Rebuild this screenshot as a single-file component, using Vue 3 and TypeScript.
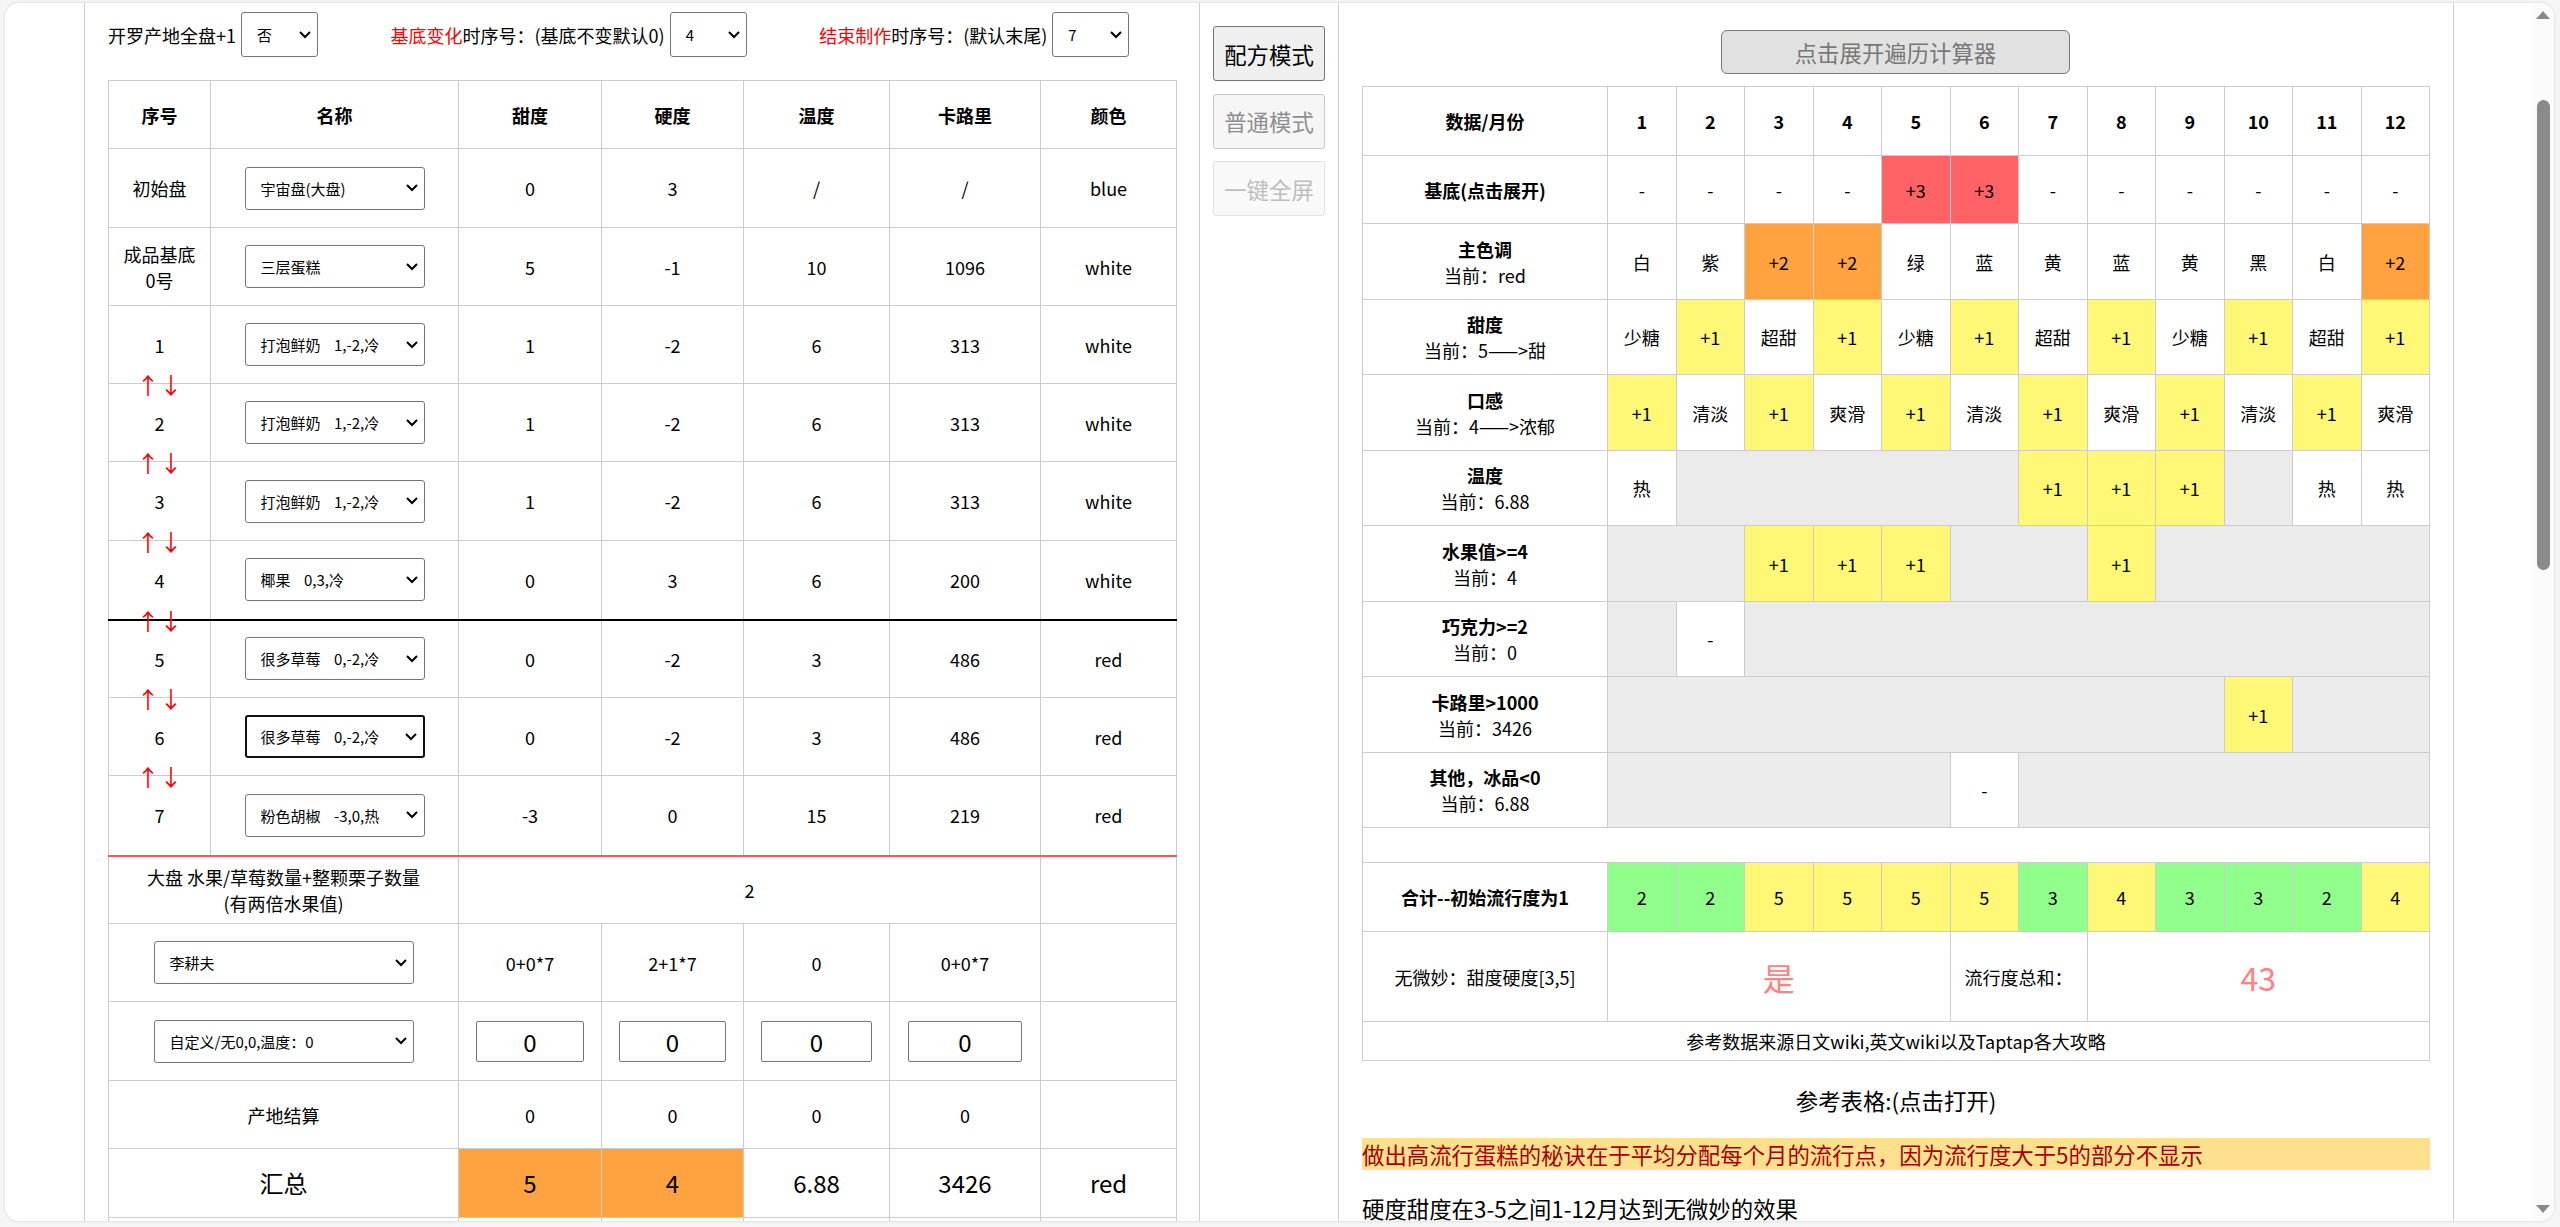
<template>
  <div class="panel">
    <div class="main">
      <!-- 配方表 -->
      <section class="left">
        <div class="top-bar">
          <label class="top-item">
            开罗产地全盘+1
            <select class="sel sel-small"><option>否</option></select>
          </label>
          <label class="top-item">
            <span><em>基底变化</em>时序号：(基底不变默认0)</span>
            <select class="sel sel-small"><option>4</option></select>
          </label>
          <label class="top-item">
            <span><em>结束制作</em>时序号：(默认末尾)</span>
            <select class="sel sel-small"><option>7</option></select>
          </label>
        </div>

        <table class="grid">
          <colgroup>
            <col v-for="(w, i) in leftCols" :key="i" :style="{ width: w + 'px' }" />
          </colgroup>
          <tr class="h-68">
            <th v-for="h in leftHead" :key="h">{{ h }}</th>
          </tr>
          <tr
            v-for="row in recipeRows"
            :key="row.seq"
            :class="{ 'line-black': row.line === 'black', 'line-red': row.line === 'red' }"
            :style="{ height: row.h + 'px' }"
          >
            <td class="seq">
              <span v-html="row.seq"></span>
              <span v-if="row.arrows" class="arrows">↑↓</span>
            </td>
            <td>
              <select class="sel sel-name" :class="{ focused: row.focused }">
                <option>{{ row.name }}</option>
              </select>
            </td>
            <td v-for="(v, i) in row.vals" :key="i">{{ v }}</td>
          </tr>
          <tr class="h-68">
            <td colspan="2">大盘 水果/草莓数量+整颗栗子数量<br />(有两倍水果值)</td>
            <td colspan="4">2</td>
            <td></td>
          </tr>
          <tr class="h-78">
            <td colspan="2"><select class="sel sel-wide"><option>李耕夫</option></select></td>
            <td>0+0*7</td>
            <td>2+1*7</td>
            <td>0</td>
            <td>0+0*7</td>
            <td></td>
          </tr>
          <tr class="h-79">
            <td colspan="2">
              <select class="sel sel-wide"><option>自定义/无0,0,温度：0</option></select>
            </td>
            <td v-for="n in 4" :key="n"><input class="num" value="0" /></td>
            <td></td>
          </tr>
          <tr class="h-68">
            <td colspan="2">产地结算</td>
            <td v-for="n in 4" :key="n">0</td>
            <td></td>
          </tr>
          <tr class="h-69 total">
            <td colspan="2">汇总</td>
            <td class="orange">5</td>
            <td class="orange">4</td>
            <td>6.88</td>
            <td>3426</td>
            <td>red</td>
          </tr>
          <tr class="h-40">
            <td colspan="2"></td>
            <td></td>
            <td></td>
            <td></td>
            <td></td>
            <td></td>
          </tr>
        </table>
      </section>

      <!-- 模式切换 -->
      <section class="mid">
        <button class="mode">配方模式</button>
        <button class="mode off">普通模式</button>
        <button class="mode off2">一键全屏</button>
      </section>

      <!-- 流行度表 -->
      <section class="right">
        <button class="expand">点击展开遍历计算器</button>
        <table class="grid">
          <colgroup>
            <col class="first-col" />
            <col v-for="n in 12" :key="n" />
          </colgroup>
          <tr class="h-69">
            <th>数据/月份</th>
            <th v-for="n in 12" :key="n">{{ n }}</th>
          </tr>
          <tr v-for="row in trendRows" :key="row.title" :style="{ height: row.h + 'px' }">
            <td>
              <b>{{ row.title }}</b>
              <template v-if="row.sub"><br />{{ row.sub }}</template>
            </td>
            <td v-for="(c, i) in row.cells" :key="i" :colspan="c.span" :class="c.color">{{ c.text }}</td>
          </tr>
          <tr class="h-35"><td colspan="13"></td></tr>
          <tr class="h-69">
            <td><b>合计--初始流行度为1</b></td>
            <td v-for="(v, i) in totals" :key="i" :class="v > 3 ? 'yellow' : 'green'">{{ v }}</td>
          </tr>
          <tr class="h-90">
            <td>无微妙：甜度硬度[3,5]</td>
            <td colspan="5" class="big">是</td>
            <td colspan="2">流行度总和：</td>
            <td colspan="5" class="big">43</td>
          </tr>
          <tr class="h-39"><td colspan="13">参考数据来源日文wiki,英文wiki以及Taptap各大攻略</td></tr>
        </table>
        <div class="ref-title">参考表格:(点击打开)</div>
        <div class="tip">做出高流行蛋糕的秘诀在于平均分配每个月的流行点，因为流行度大于5的部分不显示</div>
        <div class="note">硬度甜度在3-5之间1-12月达到无微妙的效果</div>
      </section>
    </div>

    <div class="scrollbar">
      <i class="tri up"></i>
      <i class="thumb"></i>
      <i class="tri down"></i>
    </div>
  </div>
</template>

<script setup lang="ts">
interface RecipeRow {
  seq: string
  name: string
  vals: (string | number)[]
  h: number
  arrows?: boolean
  line?: 'black' | 'red'
  focused?: boolean
}

interface Cell {
  text: string
  color?: string
  span?: number
}

interface TrendRow {
  title: string
  sub?: string
  h: number
  cells: Cell[]
}

const leftCols = [102, 248, 143, 142, 146, 151, 136]
const leftHead = ['序号', '名称', '甜度', '硬度', '温度', '卡路里', '颜色']
const gap = '\u00a0\u00a0\u00a0\u00a0'

const recipeRows: RecipeRow[] = [
  { seq: '初始盘', name: '宇宙盘(大盘)', vals: [0, 3, '/', '/', 'blue'], h: 79 },
  { seq: '成品基底<br>0号', name: '三层蛋糕', vals: [5, -1, 10, 1096, 'white'], h: 78 },
  { seq: '1', name: `打泡鲜奶${gap}1,-2,冷`, vals: [1, -2, 6, 313, 'white'], h: 78, arrows: true },
  { seq: '2', name: `打泡鲜奶${gap}1,-2,冷`, vals: [1, -2, 6, 313, 'white'], h: 78, arrows: true },
  { seq: '3', name: `打泡鲜奶${gap}1,-2,冷`, vals: [1, -2, 6, 313, 'white'], h: 79, arrows: true },
  { seq: '4', name: `椰果${gap}0,3,冷`, vals: [0, 3, 6, 200, 'white'], h: 79, arrows: true, line: 'black' },
  { seq: '5', name: `很多草莓${gap}0,-2,冷`, vals: [0, -2, 3, 486, 'red'], h: 78, arrows: true },
  { seq: '6', name: `很多草莓${gap}0,-2,冷`, vals: [0, -2, 3, 486, 'red'], h: 78, arrows: true, focused: true },
  { seq: '7', name: `粉色胡椒${gap}-3,0,热`, vals: [-3, 0, 15, 219, 'red'], h: 80, line: 'red' }
]

const plain = (list: string): Cell[] =>
  list.split(' ').map((text) => {
    if (text === '+3') return { text, color: 'red' }
    if (text === '+2') return { text, color: 'orange' }
    if (text === '+1') return { text, color: 'yellow' }
    return { text }
  })
const gray = (span: number): Cell => ({ text: '', color: 'gray', span })

const trendRows: TrendRow[] = [
  { title: '基底(点击展开)', h: 68, cells: plain('- - - - +3 +3 - - - - - -') },
  { title: '主色调', sub: '当前：red', h: 76, cells: plain('白 紫 +2 +2 绿 蓝 黄 蓝 黄 黑 白 +2') },
  { title: '甜度', sub: '当前：5——>甜', h: 75, cells: plain('少糖 +1 超甜 +1 少糖 +1 超甜 +1 少糖 +1 超甜 +1') },
  { title: '口感', sub: '当前：4——>浓郁', h: 76, cells: plain('+1 清淡 +1 爽滑 +1 清淡 +1 爽滑 +1 清淡 +1 爽滑') },
  {
    title: '温度',
    sub: '当前：6.88',
    h: 75,
    cells: [...plain('热'), gray(5), ...plain('+1 +1 +1'), gray(1), ...plain('热 热')]
  },
  {
    title: '水果值>=4',
    sub: '当前：4',
    h: 76,
    cells: [gray(2), ...plain('+1 +1 +1'), gray(2), ...plain('+1'), gray(4)]
  },
  { title: '巧克力>=2', sub: '当前：0', h: 75, cells: [gray(1), ...plain('-'), gray(10)] },
  { title: '卡路里>1000', sub: '当前：3426', h: 76, cells: [gray(9), ...plain('+1'), gray(2)] },
  { title: '其他，冰品<0', sub: '当前：6.88', h: 75, cells: [gray(5), ...plain('-'), gray(6)] }
]

const totals = [2, 2, 5, 5, 5, 5, 3, 4, 3, 3, 2, 4]
</script>

<style>
html,
body {
  margin: 0;
  height: 100%;
  overflow: hidden;
  background: #f5f5f5;
}
</style>

<style scoped>
.panel {
  display: flex;
  box-sizing: border-box;
  width: 2549px;
  height: 1218px;
  margin: 3px 0 0 5px;
  background: #fff;
  border-radius: 14px;
  box-shadow: 0 0 3px rgba(0, 0, 0, 0.14);
  overflow: hidden;
  font-family: 'Noto Sans CJK SC', 'Noto Sans', sans-serif;
  font-size: 18px;
  color: #000;
}

.main {
  flex: 1;
  display: flex;
  padding-left: 79px;
  overflow: hidden;
}

.left,
.right {
  flex: none;
  box-sizing: border-box;
  width: 1115px;
  padding-left: 23px;
  border-left: 1px solid #ccc;
}

.right {
  width: 1116px;
  border-right: 1px solid #ccc;
}

.mid {
  flex: none;
  box-sizing: border-box;
  width: 139px;
  padding: 23px 0 0 13px;
  border-left: 1px solid #ccc;
  display: flex;
  flex-direction: column;
  gap: 12.5px;
}

.top-bar {
  display: flex;
  gap: 72.5px;
  align-items: center;
  height: 45px;
  padding: 9px 0 23px;
}

.top-item {
  display: flex;
  align-items: center;
  gap: 5px;
  white-space: nowrap;
}

.top-item em {
  color: #f00;
  font-style: normal;
}

.sel {
  box-sizing: border-box;
  appearance: none;
  font-family: inherit;
  font-size: 15px;
  color: #000;
  background: #fff url("data:image/svg+xml,%3Csvg xmlns='http://www.w3.org/2000/svg' width='12' height='8'%3E%3Cpath d='M1 1l5 5 5-5' fill='none' stroke='%23000' stroke-width='2'/%3E%3C/svg%3E") no-repeat right 6px center;
  border: 1px solid #767676;
  border-radius: 3px;
  padding: 0 24px 0 15px;
}

.sel-small {
  width: 77px;
  height: 45px;
}

.sel-name {
  display: block;
  width: 180px;
  height: 43px;
  margin: 0 auto;
}

.sel-wide {
  display: block;
  width: 260px;
  height: 43px;
  margin: 0 auto;
}

.focused {
  border: 2px solid #101010;
  padding: 0 23px 0 14px;
}

.grid {
  table-layout: fixed;
  width: 1068px;
  border-collapse: collapse;
}

.first-col {
  width: 245px;
}

.grid th,
.grid td {
  border: 1px solid #ccc;
  padding: 0;
  text-align: center;
  font-size: 18px;
  line-height: 26px;
}

.grid th {
  font-weight: 700;
}

.h-35 { height: 35px; }
.h-39 { height: 39px; }
.h-40 { height: 40px; }
.h-68 { height: 68px; }
.h-69 { height: 69px; }
.h-78 { height: 78px; }
.h-79 { height: 79px; }
.h-90 { height: 90px; }

.seq {
  position: relative;
}

.arrows {
  position: absolute;
  left: 0;
  right: 0;
  bottom: -16px;
  color: #f00;
  font-size: 23px;
  line-height: 30px;
}

.grid .line-black td {
  border-bottom: 2px solid #000;
}

.grid .line-red td {
  border-bottom: 2px solid #ff5555;
}

.grid .total td {
  font-size: 24px;
}

.grid td.orange { background: #ffa340; }
.grid td.red { background: #ff6366; }
.grid td.yellow { background: #fff776; }
.grid td.green { background: #90ff8c; }
.grid td.gray { background: #ebebeb; }

.grid td.big {
  font-size: 32px;
  color: #ff8282;
}

.num {
  display: block;
  box-sizing: border-box;
  width: 76%;
  height: 41px;
  margin: 0 auto;
  border: 1px solid #767676;
  border-radius: 2px;
  text-align: center;
  font-family: inherit;
  font-size: 24px;
  padding: 0;
}

.mode {
  width: 112px;
  height: 55px;
  padding: 0;
  font-family: inherit;
  font-size: 22.4px;
  color: #000;
  background: #efefef;
  border: 1px solid #767676;
  border-radius: 3px;
}

.off {
  color: #8e8e8e;
  background: #f6f6f6;
  border-color: #c8c8c8;
}

.off2 {
  color: #bdbdbd;
  background: #f9f9f9;
  border-color: #e2e2e2;
}

.expand {
  display: block;
  box-sizing: border-box;
  width: 349px;
  height: 44px;
  margin: 27px auto 12px 359px;
  font-family: inherit;
  font-size: 22.4px;
  color: #777;
  background: #e1e1e1;
  border: 1px solid #767676;
  border-radius: 6px;
}

.ref-title {
  width: 1068px;
  margin-top: 23px;
  text-align: center;
  font-size: 22.4px;
  line-height: 32px;
}

.tip {
  width: 1068px;
  margin-top: 22px;
  font-size: 22.4px;
  line-height: 32px;
  color: #a80000;
  background: #ffe08f;
}

.note {
  margin-top: 22px;
  font-size: 22.4px;
  line-height: 32px;
}

.scrollbar {
  position: relative;
  flex: none;
  width: 22px;
  background: #fbfbfb;
}

.tri {
  position: absolute;
  left: 4px;
  width: 0;
  height: 0;
  border-left: 7.5px solid transparent;
  border-right: 7.5px solid transparent;
}

.up {
  top: 8px;
  border-bottom: 8px solid #8a8a8a;
}

.down {
  bottom: 8px;
  border-top: 8px solid #8a8a8a;
}

.thumb {
  position: absolute;
  left: 5px;
  top: 97px;
  width: 13px;
  height: 470px;
  border-radius: 7px;
  background: #8a8a8a;
}
</style>
